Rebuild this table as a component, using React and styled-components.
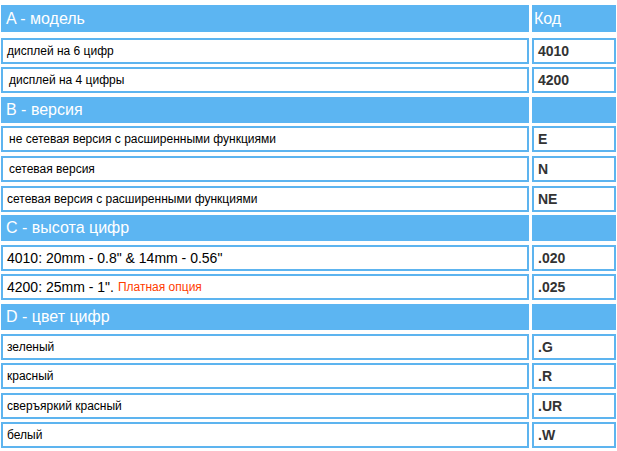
import React from "react";
import styled, { createGlobalStyle } from "styled-components";

const GlobalStyle = createGlobalStyle`
  body {
    margin: 0;
    background: #fff;
    font-family: "Liberation Sans", Arial, sans-serif;
  }
`;

const Table = styled.div`
  display: flex;
  flex-direction: column;
  gap: 3.6px;
  padding: 5px 1px 0 1px;
  width: 615px;
`;

const Row = styled.div`
  display: grid;
  grid-template-columns: 528px 84px;
  column-gap: 3px;
  height: ${(p) => (p.$first ? "27px" : "26px")};
  margin-bottom: ${(p) => (p.$first ? "2px" : "0")};
`;

const HeadCell = styled.div`
  background: #5cb5f2;
  color: #fff;
  font-size: 16px;
  display: flex;
  align-items: center;
  padding-left: ${(p) => (p.$code ? "2px" : "5px")};
`;

const Cell = styled.div`
  box-sizing: border-box;
  border: 2px solid #5db4ef;
  background: #fff;
  display: flex;
  align-items: center;
  padding-left: ${(p) => (p.$lead ? "6px" : "4px")};
  font-size: ${(p) => (p.$big ? "14px" : "12px")};
  color: #000;
  white-space: nowrap;
`;

const CodeCell = styled(Cell)`
  padding-left: 4px;
  font-size: 14px;
  font-weight: bold;
  color: #333;
`;

const Note = styled.span`
  color: #ff3c00;
  font-size: 12px;
  margin-left: 4px;
`;

const sections = [
  {
    title: "A - модель",
    code: "Код",
    rows: [
      { text: "дисплей на 6 цифр", code: "4010" },
      { text: "дисплей на 4 цифры", code: "4200", lead: true },
    ],
  },
  {
    title: "B - версия",
    rows: [
      { text: "не сетевая версия с расширенными функциями", code: "E", lead: true },
      { text: "сетевая версия", code: "N", lead: true },
      { text: "сетевая версия с расширенными функциями", code: "NE" },
    ],
  },
  {
    title: "C - высота цифр",
    rows: [
      { text: "4010: 20mm - 0.8\" & 14mm - 0.56\"", code: ".020", big: true },
      { text: "4200: 25mm - 1\".", note: "Платная опция", code: ".025", big: true },
    ],
  },
  {
    title: "D - цвет цифр",
    rows: [
      { text: "зеленый", code: ".G" },
      { text: "красный", code: ".R" },
      { text: "сверъяркий красный", code: ".UR" },
      { text: "белый", code: ".W" },
    ],
  },
];

export default function App() {
  return (
    <>
      <GlobalStyle />
      <Table>
        {sections.map((s, i) => (
          <React.Fragment key={s.title}>
            <Row $first={i === 0}>
              <HeadCell>{s.title}</HeadCell>
              <HeadCell $code>{s.code || ""}</HeadCell>
            </Row>
            {s.rows.map((r) => (
              <Row key={r.code}>
                <Cell $lead={r.lead} $big={r.big}>
                  {r.text}
                  {r.note && <Note>{r.note}</Note>}
                </Cell>
                <CodeCell>{r.code}</CodeCell>
              </Row>
            ))}
          </React.Fragment>
        ))}
      </Table>
    </>
  );
}
